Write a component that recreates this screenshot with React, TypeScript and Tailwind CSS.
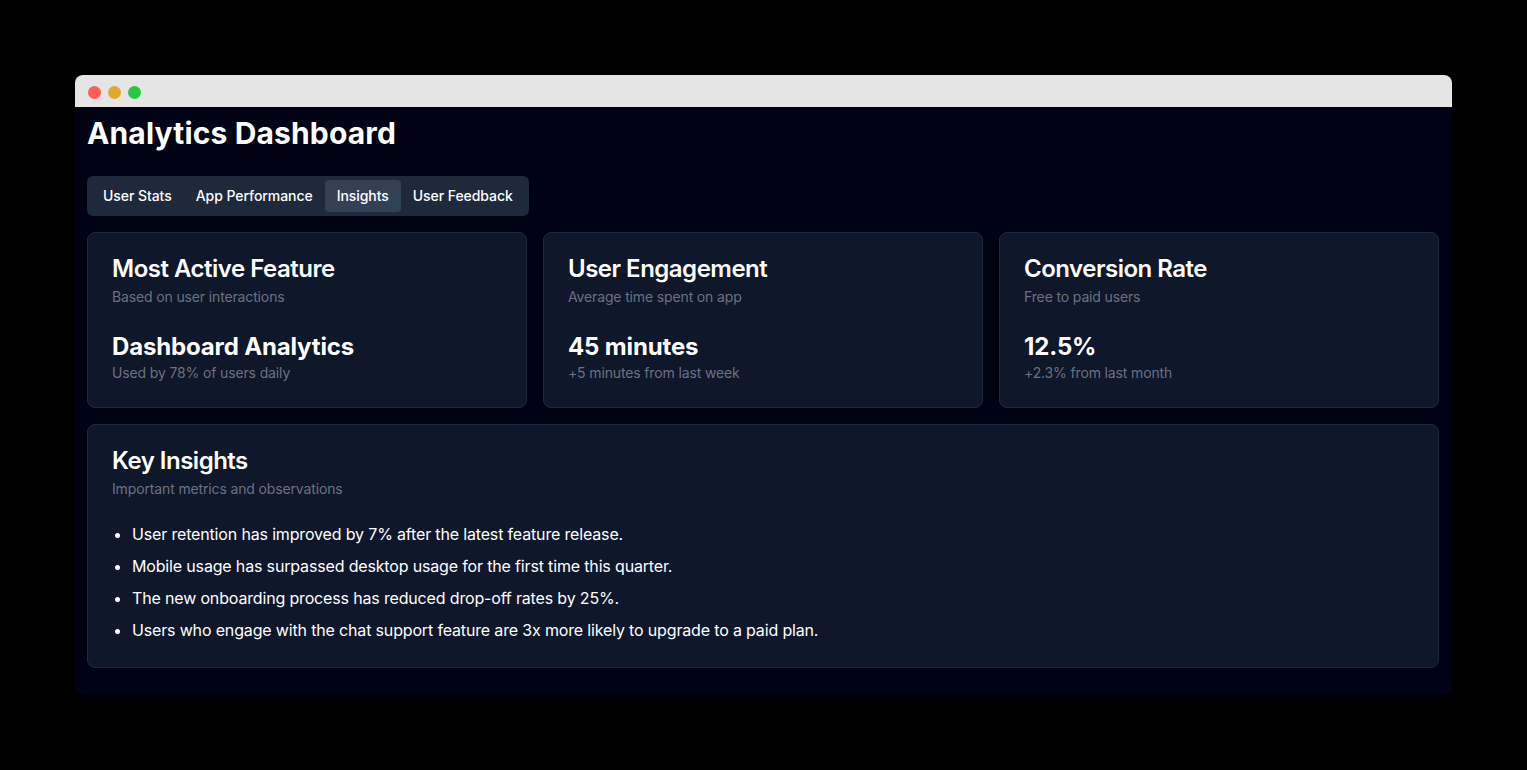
const tabs = ['User Stats', 'App Performance', 'Insights', 'User Feedback'];

const stats = [
  {
    title: 'Most Active Feature',
    description: 'Based on user interactions',
    value: 'Dashboard Analytics',
    note: 'Used by 78% of users daily',
  },
  {
    title: 'User Engagement',
    description: 'Average time spent on app',
    value: '45 minutes',
    note: '+5 minutes from last week',
  },
  {
    title: 'Conversion Rate',
    description: 'Free to paid users',
    value: '12.5%',
    note: '+2.3% from last month',
  },
];

const insights = [
  'User retention has improved by 7% after the latest feature release.',
  'Mobile usage has surpassed desktop usage for the first time this quarter.',
  'The new onboarding process has reduced drop-off rates by 25%.',
  'Users who engage with the chat support feature are 3x more likely to upgrade to a paid plan.',
];

export default function App() {
  return (
    <div className="h-[770px] bg-black p-[75px] font-['Inter',sans-serif] text-white">
      <div className="h-[620px] rounded-lg overflow-hidden flex flex-col bg-[#010314]">
        {/* Window bar */}
        <div className="h-8 shrink-0 bg-[#e5e5e5] flex items-center gap-[7px] px-[13px] pt-0.5">
          <span className="w-[13px] h-[13px] rounded-full bg-[#ff5f57]" />
          <span className="w-[13px] h-[13px] rounded-full bg-[#e0a92e]" />
          <span className="w-[13px] h-[13px] rounded-full bg-[#28c840]" />
        </div>

        <div className="pl-3 pr-[13px] pt-2">
          <h1 className="text-3xl font-bold mb-[25px] tracking-[0.15px]">Analytics Dashboard</h1>

          {/* Tabs */}
          <div className="flex w-fit h-10 items-center rounded-md bg-[#1e293b] p-1 mb-4">
            {tabs.map(tab => (
              <div
                key={tab}
                className={`rounded-sm px-3 py-1.5 text-sm font-medium tracking-[-0.06px] ${tab === 'Insights' ? 'bg-[#334155]' : ''}`}
              >
                {tab}
              </div>
            ))}
          </div>

          {/* Stat cards */}
          <div className="grid grid-cols-3 gap-4 mb-4">
            {stats.map(stat => (
              <div key={stat.title} className="rounded-lg border border-[#1e293b] bg-[#0f172a]">
                <div className="p-6 flex flex-col gap-1.5">
                  <h3 className="text-2xl font-semibold leading-none tracking-[-0.5px]">{stat.title}</h3>
                  <p className="text-sm tracking-[-0.14px] text-[#6b7280]">{stat.description}</p>
                </div>
                <div className="px-6 pb-6">
                  <div className="text-2xl font-bold tracking-[-0.15px]">{stat.value}</div>
                  <p className="text-sm tracking-[-0.14px] text-[#6b7280]">{stat.note}</p>
                </div>
              </div>
            ))}
          </div>

          {/* Key insights */}
          <div className="rounded-lg border border-[#1e293b] bg-[#0f172a]">
            <div className="p-6 flex flex-col gap-1.5">
              <h3 className="text-2xl font-semibold leading-none tracking-[-0.5px]">Key Insights</h3>
              <p className="text-sm tracking-[-0.14px] text-[#6b7280]">Important metrics and observations</p>
            </div>
            <div className="px-6 pb-6">
              <ul className="list-disc pl-5 space-y-2 -mt-px mb-px tracking-[-0.16px]">
                {insights.map(item => (
                  <li key={item}>{item}</li>
                ))}
              </ul>
            </div>
          </div>
        </div>
      </div>
    </div>
  );
}
